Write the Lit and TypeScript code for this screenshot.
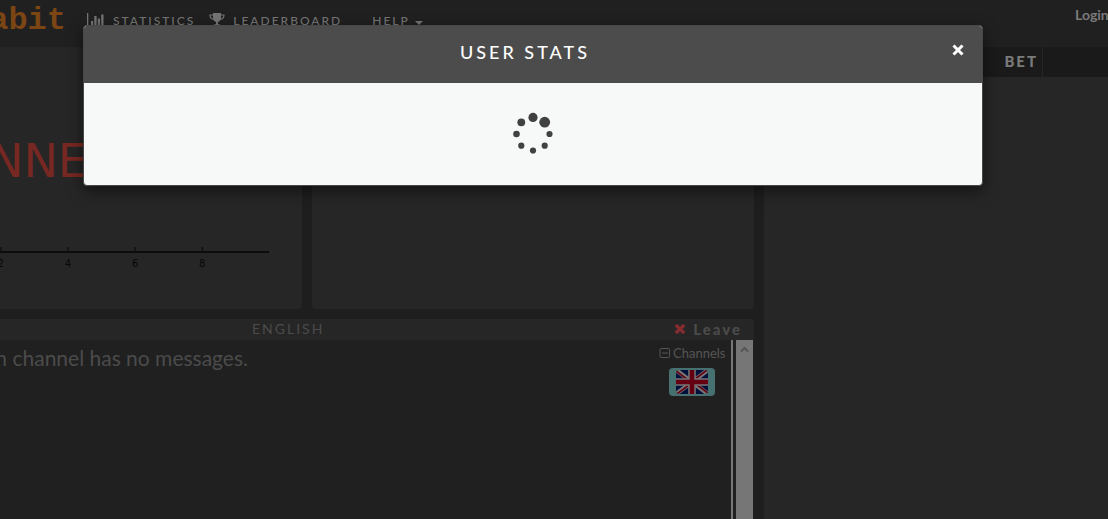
import { LitElement, html, css, svg } from "lit";
import { customElement } from "lit/decorators.js";

@customElement("stats-dialog")
class StatsDialog extends LitElement {
  static styles = css`
    :host { display: block; }
    .dialog {
      box-sizing: border-box; width: 900px; max-width: 100%; margin: 0 auto;
      border: 1px solid #484848; border-radius: 4px; overflow: hidden;
      background: #f7f9f9; box-shadow: 0 5px 15px rgba(0, 0, 0, 0.5);
    }
    .head {
      display: grid; grid-template-columns: 48px 1fr 48px; align-items: center;
      height: 57px; padding-bottom: 6px; box-sizing: border-box; background: #4c4c4c; color: #fff;
    }
    h2 {
      grid-column: 2; margin: 0; text-align: center; text-indent: -16px;
      font-size: 18px; line-height: 26px; font-weight: 500; letter-spacing: 3px;
    }
    .close {
      width: 24px; height: 24px; margin: 0 0 4px 12px; padding: 0; border: 0;
      background: none; color: #fff; display: grid; place-items: center;
    }
    .body { height: 102px; padding-bottom: 2px; box-sizing: border-box; display: grid; place-items: center; }
    .spinner { fill: #414141; display: block; }
  `;
  render() {
    return html`<section class="dialog" role="dialog" aria-labelledby="title">
      <div class="head">
        <h2 id="title">USER STATS</h2>
        <button class="close" aria-label="Close">
          <svg width="14" height="14" viewBox="0 0 14 14"><path d="M2.5 2.5L11.5 11.5M11.5 2.5L2.5 11.5" stroke="currentColor" stroke-width="3"/></svg>
        </button>
      </div>
      <div class="body">
        <svg class="spinner" width="42" height="42" viewBox="0 0 42 42" role="img" aria-label="Loading">
          <circle cx="21" cy="5.4" r="4.6"/><circle cx="32.7" cy="10.2" r="5.4"/>
          <circle cx="37.5" cy="22" r="3.1"/><circle cx="32.7" cy="33.7" r="3.1"/>
          <circle cx="21" cy="38.5" r="3.1"/><circle cx="9.3" cy="33.7" r="3.1"/>
          <circle cx="4.5" cy="22" r="3.3"/><circle cx="9.3" cy="10.3" r="3.9"/>
        </svg>
      </div>
    </section>`;
  }
}

@customElement("chat-panel")
class ChatPanel extends LitElement {
  static styles = css`
    :host { display: flex; flex-direction: column; background: #202020; color: #4b4b4b; border-radius: 0 4px 0 0; overflow: hidden; }
    .bar {
      display: grid; grid-template-columns: 1fr auto; align-items: start; height: 21px;
      padding: 0 12px 0 252px; box-sizing: border-box; background: #262626;
    }
    .name { margin: 0; font-size: 14px; font-weight: 400; line-height: 20px; letter-spacing: 2px; }
    .leave {
      border: 0; padding: 0; background: none; color: inherit; display: flex; align-items: center; gap: 7px;
      font: 900 15px/20px Lato, sans-serif; letter-spacing: 2px;
    }
    .main { flex: 1; display: flex; padding-right: 1px; }
    .text { flex: 1; margin: 0; padding-top: 4px; font-size: 21px; line-height: 28px; white-space: nowrap; }
    .text span { display: block; width: 248px; direction: rtl; overflow: hidden; }
    .text bdi { direction: ltr; }
    .channels { width: 72px; padding-top: 4px; border-right: 2px solid #767676; display: flex; flex-direction: column; gap: 6px; }
    .toggle {
      border: 0; padding: 0; background: none; color: #555; display: flex; align-items: center; gap: 2px;
      font: 400 13px/18px Lato, sans-serif;
    }
    .flag { width: 46px; height: 28px; margin-left: 10px; padding: 0; border: 0; border-radius: 4px; background: #477170; display: grid; place-items: center; }
    .flag svg { border-radius: 3px; }
    .scroll { width: 17px; margin-left: 3px; background: #767676; display: flex; justify-content: center; padding-top: 6px; box-sizing: border-box; }
    svg { display: block; }
  `;
  render() {
    return html`
      <div class="bar">
        <h2 class="name">ENGLISH</h2>
        <button class="leave">
          <svg width="12" height="12" viewBox="0 0 12 12"><path d="M1.8 2L10.2 10M10.2 2L1.8 10" stroke="#852c2e" stroke-width="3.3"/></svg>Leave
        </button>
      </div>
      <div class="main">
        <p class="text"><span><bdi>English channel has no messages.</bdi></span></p>
        <div class="channels">
          <button class="toggle">
            <svg width="12" height="12" viewBox="0 0 12 12" fill="none" stroke="currentColor"><rect x="1" y="1.5" width="9.5" height="9" rx="1"/><path d="M3 6H9"/></svg>Channels
          </button>
          <button class="flag" aria-label="English">
            <svg width="32" height="24" viewBox="0 0 32 24">
              <path fill="#00103c" d="M0 0H32V24H0Z"/>
              <path stroke="#757575" stroke-width="4.4" d="M0 0L32 24M32 0L0 24"/>
              <path stroke="#650013" stroke-width="1.6" d="M0 1L14 11.5M18 12.5L32 23M31 0L17 10.5M15 13.5L1 24"/>
              <path stroke="#757575" stroke-width="7.6" d="M16 0V24M0 12H32"/>
              <path stroke="#650013" stroke-width="4.6" d="M16 0V24M0 12H32"/>
            </svg>
          </button>
        </div>
        <div class="scroll"><svg width="9" height="7" viewBox="0 0 9 7"><path d="M1 5.5L4.5 2L8 5.5" fill="none" stroke="#555" stroke-width="2"/></svg></div>
      </div>`;
  }
}

@customElement("app-root")
class AppRoot extends LitElement {
  static styles = css`
    :host { display: block; position: relative; overflow: hidden; font-family: Lato, sans-serif; color: #7a7a7a; background: #1e1e1e; }
    .page { min-height: 100vh; display: flex; flex-direction: column; }
    header { height: 47px; flex: none; display: flex; background: #202020; overflow: hidden; white-space: nowrap; }
    .logo {
      width: 66px; display: flex; justify-content: flex-end; color: #7c4514; text-decoration: none;
      font: 700 32px/42px "Liberation Mono", monospace;
    }
    nav { display: flex; flex: 1; padding-left: 21px; }
    .link {
      display: flex; align-items: center; height: 42px; margin-right: 14px; gap: 8px; color: #757575;
      text-decoration: none; font-size: 12px; font-weight: 500; line-height: 20px; letter-spacing: 2px;
    }
    .menu { margin-left: 16px; gap: 5px; border: 0; padding: 0; background: none; font-family: inherit; }
    .caret { margin-top: 4px; }
    .login { color: #7b7b7b; font-size: 14px; font-weight: 700; line-height: 20px; width: 33px; padding-top: 5px; text-decoration: none; }
    main { flex: 1; display: grid; grid-template-columns: 302fr 442fr 344fr; grid-template-rows: 262px 1fr; gap: 10px; }
    .panel { background: #262626; border-radius: 0 0 4px 4px; min-width: 0; overflow: hidden; }
    .graph { border-radius: 0 0 4px 0; }
    .graph svg { width: 100%; height: 100%; font-family: "DejaVu Sans", sans-serif; }
    chat-panel { grid-column: 1 / 3; }
    .side { grid-column: 3; grid-row: 1 / 3; background: #262626; }
    .tabs { height: 30px; background: #1a1a1a; display: flex; }
    .tab {
      width: 279px; box-sizing: border-box; padding: 0 4px 2px 0; border: 0; border-right: 1px solid #262626; background: none;
      color: #7a7a7a; text-align: right; font: 900 15px/28px Lato, sans-serif; letter-spacing: 2px;
    }
    .modal { position: absolute; top: 25px; left: 0; right: 42px; }
    svg { display: block; }
  `;
  render() {
    const ticks = [2, 4, 6, 8];
    return html`
      <div class="page">
        <header>
          <a class="logo" href="#">abit</a>
          <nav>
            <a class="link" href="#">
              <svg width="18" height="16" viewBox="0 0 18 16" fill="currentColor"><path d="M0 0H1.3V13H18V14.2H0ZM4 8H6.2V12H4ZM7.3 3H9.6V12H7.3ZM10.8 5.5H13V12H10.8ZM14.2 1.5H16.5V12H14.2Z"/></svg>STATISTICS
            </a>
            <a class="link" href="#">
              <svg width="16" height="16" viewBox="0 0 16 16"><path fill="currentColor" d="M4 0H12V5.5Q11.3 8.2 9 9V11.2H10.5Q12 11.5 12 13.5H4Q4 11.5 5.5 11.2H7V9Q4.7 8.2 4 5.5Z"/><path fill="none" stroke="currentColor" stroke-width="1.2" d="M4 2H1Q1 6 5 6.4M12 2H15Q15 6 11 6.4"/></svg>LEADERBOARD
            </a>
            <button class="link menu">HELP<svg class="caret" width="8" height="4" viewBox="0 0 8 4"><path d="M0 0H8L4 4Z" fill="currentColor"/></svg></button>
          </nav>
          <a class="login" href="#">Login</a>
        </header>
        <main>
          <section class="panel graph">
            <svg viewBox="0 0 302 262" preserveAspectRatio="xMaxYMin meet" role="img" aria-label="Graph">
              <text x="-11" y="130" font-size="46" fill="#782822">NNE</text>
              <path d="M0 205H269" stroke="#0c0c0c" stroke-width="2"/>
              ${ticks.map((n) => {
                const x = n * 33.6 - 67 + 0.5;
                return svg`<path d="M${x} 200V205" stroke="#111" stroke-width="1.5"/><text x=${x} y="220" font-size="10" fill="#080808" text-anchor="middle">${n}</text>`;
              })}
            </svg>
          </section>
          <section class="panel"></section>
          <chat-panel></chat-panel>
          <aside class="side"><div class="tabs"><button class="tab">BET</button></div></aside>
        </main>
      </div>
      <div class="modal"><stats-dialog></stats-dialog></div>`;
  }
}
